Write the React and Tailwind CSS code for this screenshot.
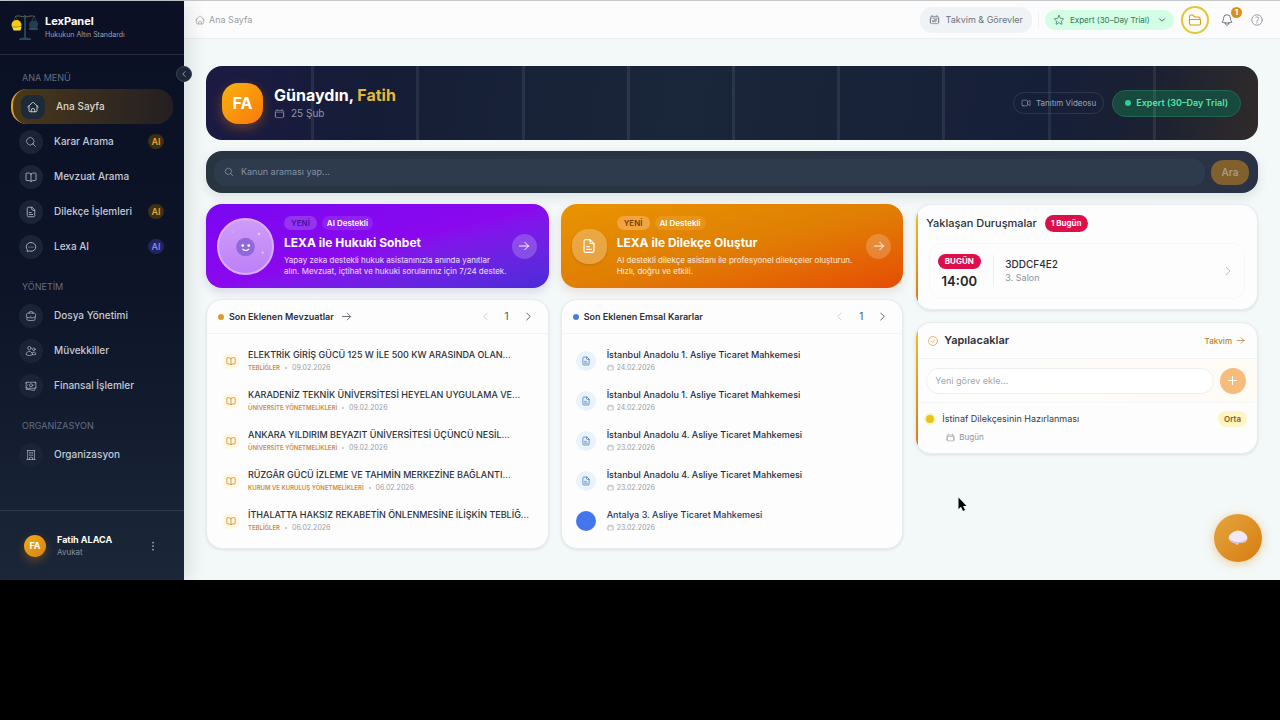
import React, { useState } from 'react';
import {
  HiOutlineMagnifyingGlass,
  HiOutlineBriefcase,
  HiOutlineUsers,
  HiOutlineBanknotes,
  HiOutlineBuildingOffice,
  HiOutlineCalendar,
  HiOutlineCalendarDays,
  HiOutlineStar,
  HiOutlineBell,
  HiOutlineQuestionMarkCircle,
  HiOutlineVideoCamera,
  HiOutlineCheckCircle,
  HiOutlineArrowRight,
  HiOutlineChevronLeft,
  HiOutlineChevronRight,
  HiOutlineChevronDown,
  HiOutlinePlus,
  HiEllipsisVertical,
} from 'react-icons/hi2';

const Svg = ({ className, children }) => (
  <svg
    viewBox="0 0 24 24"
    fill="none"
    stroke="currentColor"
    strokeWidth="1.8"
    strokeLinecap="round"
    strokeLinejoin="round"
    className={className}
    aria-hidden="true"
  >
    {children}
  </svg>
);

const HomeIcon = ({ className }) => (
  <Svg className={className}>
    <path d="M1.5 12 L10.7 3.2 a2 2 0 0 1 2.6 0 L22.5 12" />
    <path d="M4 10v9a2.5 2.5 0 0 0 2.5 2.5h11a2.5 2.5 0 0 0 2.5-2.5v-9" />
    <path d="M8.5 21.5v-3a3.5 3.5 0 0 1 7 0v3" />
  </Svg>
);

const BookIcon = ({ className }) => (
  <Svg className={className}>
    <path d="M12 6C10.5 4.5 8 4 5 4H3.5a1.5 1.5 0 0 0-1.5 1.5v12A1.5 1.5 0 0 0 3.5 19H6c2.5 0 4.5.5 6 2 1.5-1.5 3.5-2 6-2h2.5a1.5 1.5 0 0 0 1.5-1.5v-12A1.5 1.5 0 0 0 20.5 4H19c-3 0-5.5.5-7 2z" />
    <path d="M12 6v15" />
  </Svg>
);

const FileIcon = ({ className }) => (
  <Svg className={className}>
    <path d="M13.5 2.5H7A2.5 2.5 0 0 0 4.5 5v14A2.5 2.5 0 0 0 7 21.5h10a2.5 2.5 0 0 0 2.5-2.5V8.5z" />
    <path d="M13.5 2.5V6A2.5 2.5 0 0 0 16 8.5h3.5" />
    <path d="M8.5 13h4M8.5 17h7" />
  </Svg>
);

const ChatIcon = ({ className }) => (
  <Svg className={className}>
    <path d="M12 3c5.5 0 9.5 3.8 9.5 8.8s-4 8.7-9.5 8.7c-1.3 0-2.5-.2-3.6-.6L4 21l.8-3.7c-1.5-1.5-2.3-3.4-2.3-5.5C2.5 6.8 6.5 3 12 3z" />
    <path d="M8 12h.01M12 12h.01M16 12h.01" strokeWidth="2.4" />
  </Svg>
);

const FolderIcon = ({ className }) => (
  <Svg className={className}>
    <path d="M2.5 18V6A2.5 2.5 0 0 1 5 3.5h3.5L11.5 7H18a2.5 2.5 0 0 1 2.5 2.5V11" />
    <path d="M2.5 18V13a2 2 0 0 1 2-2h15a2 2 0 0 1 2 2v5a2.5 2.5 0 0 1-2.5 2.5H5A2.5 2.5 0 0 1 2.5 18z" />
  </Svg>
);

const ScalesLogo = () => (
  <svg viewBox="0 0 28 28" className="w-7 h-7 shrink-0" fill="none" aria-hidden="true">
    <path d="M4 2.5c4-1.500 6 .3 10 .3s6-1.800 10-.3" stroke="#5d6450" strokeWidth="1" />
    <path d="M14 1v23" stroke="#2f5268" strokeWidth="1.5" />
    <path d="M8 25.5c2-2 10-2 12 0z" fill="#284a60" stroke="#284a60" />
    <path d="M4.5 3L2 8M4.500 3L8 8M23 3L19 10M23 3L27 10" stroke="#2b4558" strokeWidth=".8" />
    <circle cx="5.5" cy="11" r="5" fill="#f2cb13" />
    <path d="M1.5 13h9l-1 3.500h-7z" fill="#f7dd3d" />
    <path d="M1 12.500c2.500 1.200 5.500 1 9-.5" stroke="#8b7410" strokeWidth=".7" />
    <circle cx="22.5" cy="11" r="4.5" fill="#233c50" />
    <path d="M18 15h9" stroke="#35576d" strokeWidth="1.5" />
  </svg>
);

const menu = [
  {
    title: 'ANA MENÜ',
    items: [
      { name: 'Ana Sayfa', icon: HomeIcon, active: true },
      { name: 'Karar Arama', icon: HiOutlineMagnifyingGlass, badge: 'amber' },
      { name: 'Mevzuat Arama', icon: BookIcon },
      { name: 'Dilekçe İşlemleri', icon: FileIcon, badge: 'amber' },
      { name: 'Lexa AI', icon: ChatIcon, badge: 'indigo' },
    ],
  },
  {
    title: 'YÖNETİM',
    items: [
      { name: 'Dosya Yönetimi', icon: HiOutlineBriefcase },
      { name: 'Müvekkiller', icon: HiOutlineUsers },
      { name: 'Finansal İşlemler', icon: HiOutlineBanknotes },
    ],
  },
  {
    title: 'ORGANİZASYON',
    items: [{ name: 'Organizasyon', icon: HiOutlineBuildingOffice }],
  },
];

const badgeColors = {
  amber: 'bg-[#3d3015] text-[#e0a82e]',
  indigo: 'bg-[#1f2560] text-[#8b83f0]',
};

const laws = [
  { title: 'ELEKTRİK GİRİŞ GÜCÜ 125 W İLE 500 KW ARASINDA OLAN…', type: 'TEBLİĞLER', date: '09.02.2026' },
  { title: 'KARADENİZ TEKNİK ÜNİVERSİTESİ HEYELAN UYGULAMA VE…', type: 'ÜNİVERSİTE YÖNETMELİKLERİ', date: '09.02.2026' },
  { title: 'ANKARA YILDIRIM BEYAZIT ÜNİVERSİTESİ ÜÇÜNCÜ NESİL…', type: 'ÜNİVERSİTE YÖNETMELİKLERİ', date: '09.02.2026' },
  { title: 'RÜZGÂR GÜCÜ İZLEME VE TAHMİN MERKEZİNE BAĞLANTI…', type: 'KURUM VE KURULUŞ YÖNETMELİKLERİ', date: '06.02.2026' },
  { title: 'İTHALATTA HAKSIZ REKABETİN ÖNLENMESİNE İLİŞKİN TEBLİĞ…', type: 'TEBLİĞLER', date: '06.02.2026' },
];

const decisions = [
  { title: 'İstanbul Anadolu 1. Asliye Ticaret Mahkemesi', date: '24.02.2026' },
  { title: 'İstanbul Anadolu 1. Asliye Ticaret Mahkemesi', date: '24.02.2026' },
  { title: 'İstanbul Anadolu 4. Asliye Ticaret Mahkemesi', date: '23.02.2026' },
  { title: 'İstanbul Anadolu 4. Asliye Ticaret Mahkemesi', date: '23.02.2026' },
  { title: 'Antalya 3. Asliye Ticaret Mahkemesi', date: '23.02.2026', hovered: true },
];

const NavItem = ({ item }) => {
  const Icon = item.icon;
  return (
    <a
      href="#"
      className={`flex items-center h-[35px] mx-[11px] pl-2 pr-[9px] rounded-2xl text-[10px] font-medium ${
        item.active
          ? 'border-l-2 border-[#d9a22b] bg-linear-to-r from-[#4a3818] to-[#231f22] text-[#d9d6d0]'
          : 'text-[#c3cad6]'
      }`}
    >
      <span
        className={`flex items-center justify-center w-6 h-6 mr-[11px] shrink-0 ${
          item.active ? 'rounded-lg bg-[#1d2a3a] text-[#d6d9dd]' : 'rounded-full bg-[#1b2437] text-[#aab3c2]'
        }`}
      >
        <Icon className="w-3 h-3" />
      </span>
      <span className="flex-1 whitespace-nowrap">{item.name}</span>
      {item.badge && (
        <span
          className={`flex items-center justify-center w-4 h-[15px] rounded-full text-[9px] font-semibold ${badgeColors[item.badge]}`}
        >
          AI
        </span>
      )}
    </a>
  );
};

const Sidebar = ({ onToggle }) => (
  <aside className="relative z-10 flex flex-col w-[184px] shrink-0 bg-linear-to-b from-[#0b1024] via-[#0d1428] to-[#1b2738] shadow-[4px_0_20px_rgba(15,23,42,0.12)]">
    <div className="flex items-center gap-[6px] h-[54px] pl-[11px] border-b border-white/10">
      <ScalesLogo />
      <div>
        <div className="text-[11px] leading-[14px] font-bold text-white">LexPanel</div>
        <div className="text-[7px] leading-[14px] text-[#98a0b0]">Hukukun Altın Standardı</div>
      </div>
    </div>

    <nav className="flex-1 pb-[37px]">
      {menu.map((group) => (
        <div key={group.title}>
          <h2 className="pt-[17px] pb-[5px] pl-[22px] text-[9px] leading-3 text-[#646d80]">{group.title}</h2>
          {group.items.map((item) => (
            <NavItem key={item.name} item={item} />
          ))}
        </div>
      ))}
    </nav>

    <div className="flex items-center h-[70px] pl-6 pr-6 border-t border-white/10">
      <span className="flex items-center justify-center w-[22px] h-[22px] rounded-full bg-linear-to-br from-[#f0ab1c] to-[#d9820c] text-[9px] font-bold text-white shadow-[0_4px_10px_rgba(217,130,12,0.35)]">
        FA
      </span>
      <div className="flex-1 ml-[11px]">
        <div className="text-[9px] leading-[13px] font-bold text-white">Fatih ALACA</div>
        <div className="text-[8px] leading-[13px] text-[#8790a0]">Avukat</div>
      </div>
      <button type="button" aria-label="Hesap menüsü" className="text-[#aab2c0]">
        <HiEllipsisVertical className="w-[14px] h-[14px]" />
      </button>
    </div>

    <button
      type="button"
      onClick={onToggle}
      aria-label="Menüyü daralt"
      className="absolute top-[65px] -right-2 flex items-center justify-center w-4 h-4 rounded-full bg-[#1c2636] border border-[#3a4454] text-[#c4cad4]"
    >
      <HiOutlineChevronLeft className="w-2 h-2 stroke-2" />
    </button>
  </aside>
);

const Topbar = () => (
  <header className="flex items-center justify-between h-[38px] pl-[11px] pr-4 bg-[#fcfcfc] border-b border-[#eceff0]">
    <a href="#" className="flex items-center gap-1 text-[9px] text-[#9a9fa6]">
      <HomeIcon className="w-[10px] h-[10px]" />
      Ana Sayfa
    </a>

    <div className="flex items-center">
      <button
        type="button"
        className="flex items-center gap-[6px] h-[26px] px-[9px] rounded-xl bg-[#f0f3f5] text-[9px] text-[#6b7280]"
      >
        <HiOutlineCalendarDays className="w-[11px] h-[11px]" />
        Takvim &amp; Görevler
      </button>
      <span className="w-px h-4 mx-[6px] bg-[#eef0f1]" />
      <label className="flex items-center gap-[5px] h-5 px-2 rounded-full bg-[#d3fde4] text-[#2f7a55]">
        <HiOutlineStar className="w-3 h-3" />
        <select
          aria-label="Abonelik"
          className="appearance-none w-[83px] h-4 bg-transparent text-[8px] leading-4 outline-none"
        >
          <option>Expert (30–Day Trial)</option>
        </select>
        <HiOutlineChevronDown className="w-2 h-2 stroke-3" />
      </label>
      <button
        type="button"
        aria-label="Dosyalar"
        className="flex items-center justify-center w-7 h-7 ml-[7px] rounded-full border-2 border-[#e3c53a] bg-[#fffdf3] text-[#d39a22]"
      >
        <FolderIcon className="w-[14px] h-[14px]" />
      </button>
      <button type="button" aria-label="Bildirimler" className="relative ml-[11px] text-[#5f6670]">
        <HiOutlineBell className="w-[14px] h-[14px]" />
        <span className="absolute -top-[6px] -right-2 flex items-center justify-center w-[11px] h-[11px] rounded-full bg-[#d8911b] text-[8px] font-bold text-white">
          1
        </span>
      </button>
      <button type="button" aria-label="Yardım" className="ml-4 text-[#8b9199]">
        <HiOutlineQuestionMarkCircle className="w-[14px] h-[14px]" />
      </button>
    </div>
  </header>
);

const Welcome = () => (
  <section className="relative flex items-center justify-between h-[74px] pl-4 pr-[17px] rounded-2xl overflow-hidden bg-[linear-gradient(100deg,#1c1a44_0%,#151d36_16%,#1a2639_45%,#161f38_80%,#1c2131_90%,#302b2a_100%)]">
    <div className="flex items-center gap-[11px]">
      <span className="flex items-center justify-center w-[41px] h-[41px] rounded-2xl bg-linear-to-br from-[#f7b20e] to-[#f9780b] text-base font-bold text-white shadow-[0_4px_12px_rgba(249,130,11,0.35)]">
        FA
      </span>
      <div>
        <h1 className="text-base leading-5 font-bold text-white">
          Günaydın, <span className="text-[#e6b83a]">Fatih</span>
        </h1>
        <p className="flex items-center gap-[6px] text-[10px] leading-4 text-[#8d96a6]">
          <HiOutlineCalendar className="w-[11px] h-[11px]" />
          25 Şub
        </p>
      </div>
    </div>

    <div className="flex items-center gap-2">
      <button
        type="button"
        className="flex items-center gap-[5px] h-[22px] px-[7px] rounded-full border border-white/10 text-[8px] text-[#9aa3b2]"
      >
        <HiOutlineVideoCamera className="w-[10px] h-[10px]" />
        Tanıtım Videosu
      </button>
      <span className="flex items-center gap-[5px] h-[27px] px-3 rounded-full border border-[#22664f] bg-[#17493f] text-[9px] font-semibold text-[#57e3a4]">
        <span className="w-[6px] h-[6px] rounded-full bg-[#2fcf94]" />
        Expert (30–Day Trial)
      </span>
    </div>

    {/* Column lines */}
    <div className="absolute inset-0 flex pl-[3px] pointer-events-none">
      {Array.from({ length: 10 }, (_, i) => (
        <span key={i} className="flex-1 border-r-3 border-white/8 last:border-0" />
      ))}
    </div>
  </section>
);

const LawSearch = () => (
  <form
    onSubmit={(e) => e.preventDefault()}
    className="flex items-center gap-[6px] h-[42px] pl-2 pr-[9px] rounded-2xl bg-linear-to-r from-[#283440] to-[#2a3245] shadow-[0_4px_12px_rgba(15,23,42,0.10)]"
  >
    <label className="flex flex-1 items-center gap-[7px] h-[27px] px-[10px] rounded-xl bg-[#2d3b4d] text-[#8391a3]">
      <HiOutlineMagnifyingGlass className="w-[10px] h-[10px] stroke-2" />
      <input
        type="text"
        aria-label="Kanun araması"
        placeholder="Kanun araması yap..."
        className="flex-1 h-5 bg-transparent text-[9px] leading-5 text-white outline-none placeholder:text-[#8391a3]"
      />
    </label>
    <button type="submit" className="w-[38px] h-[25px] rounded-xl bg-[#80602c] text-[10px] font-semibold text-[#a89a80]">
      Ara
    </button>
  </form>
);

const PromoCard = ({ className, badgeClass, visual, title, lines }) => (
  <a href="#" className={`flex items-center gap-[10px] h-[84px] pl-[11px] pr-3 rounded-2xl text-white ${className}`}>
    {visual}
    <div className="flex-1 min-w-0">
      <div className="flex items-center gap-[5px]">
        <span className={`px-[7px] rounded-full text-[8px] leading-[14px] font-semibold ${badgeClass}`}>YENİ</span>
        <span className="px-[5px] rounded-full bg-white/10 text-[8px] leading-[14px] font-semibold">AI Destekli</span>
      </div>
      <h2 className="mt-1 text-xs leading-[18px] font-bold">{title}</h2>
      <p className="mt-[3px] text-[8px] leading-[11px] text-white/85 whitespace-nowrap">
        {lines[0]}
        <br />
        {lines[1]}
      </p>
    </div>
    <span className="flex items-center justify-center w-[25px] h-[25px] shrink-0 rounded-full bg-white/20">
      <HiOutlineArrowRight className="w-3 h-3 stroke-2" />
    </span>
  </a>
);

const RobotFace = () => (
  <span className="flex items-center justify-center w-[57px] h-[57px] shrink-0 rounded-full bg-linear-to-b from-[#cf9cf8] to-[#bd80f8] border-2 border-[#d9b0fb]">
    <svg viewBox="0 0 57 57" className="w-full h-full" aria-hidden="true">
      <circle cx="28.5" cy="29" r="10" fill="#9167dc" />
      <circle cx="25.5" cy="27.5" r="1.5" fill="#fff" />
      <circle cx="32" cy="27.5" r="1.5" fill="#fff" />
      <path d="M25.5 31.5q3.2 2.5 6.5 0" stroke="#fff" strokeWidth="1.2" fill="none" strokeLinecap="round" />
      <circle cx="43" cy="15" r="1.5" fill="#e3c4fd" />
      <circle cx="47" cy="35" r="1.2" fill="#e3c4fd" />
      <circle cx="15" cy="13" r="1" fill="#d8b2fc" />
    </svg>
  </span>
);

const ListCard = ({ dot, title, arrow, children }) => {
  const [page, setPage] = useState(1);
  return (
    <section className="rounded-2xl bg-[#fdfdfd] border border-[#e8ecee] shadow-[0_1px_3px_rgba(15,23,42,0.10)]">
      <div className="flex items-center h-[34px] px-[11px] border-b border-[#f1f3f4]">
        <span className={`w-[6px] h-[6px] mr-[5px] rounded-full ${dot}`} />
        <h2 className="text-[9px] font-semibold text-[#2b3038]">{title}</h2>
        {arrow && <HiOutlineArrowRight className="w-[11px] h-[11px] ml-[7px] text-[#5f6670] stroke-2" />}
        <div className="flex items-center gap-[14px] ml-auto pr-[3px] text-[10px] text-[#4b525c]">
          <button type="button" aria-label="Önceki" disabled={page === 1} onClick={() => setPage(page - 1)} className="disabled:text-[#c9cdd2]">
            <HiOutlineChevronLeft className="w-[11px] h-[11px] stroke-2" />
          </button>
          <span>{page}</span>
          <button type="button" aria-label="Sonraki" onClick={() => setPage(page + 1)}>
            <HiOutlineChevronRight className="w-[11px] h-[11px] stroke-2" />
          </button>
        </div>
      </div>
      <ul className="py-[7px]">{children}</ul>
    </section>
  );
};

const LawList = () => (
  <ListCard dot="bg-[#dd9a2c]" title="Son Eklenen Mevzuatlar" arrow>
    {laws.map((law) => (
      <li key={law.title} className="flex items-center h-10 pl-4">
        <span className="flex items-center justify-center w-4 h-4 mr-[9px] shrink-0 rounded-md bg-[#fef8e4] text-[#cf8f2e]">
          <BookIcon className="w-[10px] h-[10px] stroke-2" />
        </span>
        <div className="min-w-0 whitespace-nowrap">
          <div className="text-[9px] leading-[13px] font-medium text-[#2b3038]">{law.title}</div>
          <div className="flex items-center text-[7px] leading-[13px] text-[#9a9fa6]">
            <span className="text-[6px] font-semibold text-[#d08b3c]">{law.type}</span>
            <span className="w-[2px] h-[2px] mx-[5px] rounded-full bg-[#b8bcc2]" />
            {law.date}
          </div>
        </div>
      </li>
    ))}
  </ListCard>
);

const DecisionList = () => (
  <ListCard dot="bg-[#4a7de0]" title="Son Eklenen Emsal Kararlar">
    {decisions.map((item, i) => (
      <li key={i} className="flex items-center h-10 pl-[14px]">
        <span
          className={`flex items-center justify-center w-5 h-5 mr-[11px] shrink-0 rounded-full ${
            item.hovered ? 'bg-[#4375ee] text-[#4b7cf0]' : 'bg-[#e8f3fc] text-[#3f74b8]'
          }`}
        >
          <FileIcon className="w-[10px] h-[10px]" />
        </span>
        <div className="min-w-0 whitespace-nowrap">
          <div className={`text-[9px] leading-[13px] font-medium ${item.hovered ? 'text-[#26375f]' : 'text-[#1f2d42]'}`}>
            {item.title}
          </div>
          <div className="flex items-center gap-[3px] text-[7px] leading-[13px] text-[#9a9fa6]">
            <HiOutlineCalendar className="w-[7px] h-[7px]" />
            {item.date}
          </div>
        </div>
      </li>
    ))}
  </ListCard>
);

const SideCard = ({ children }) => (
  <section className="flex rounded-2xl overflow-hidden bg-[#fdfdfd] border border-[#e8ecee] shadow-[0_1px_3px_rgba(15,23,42,0.10)]">
    <span className="w-[2px] shrink-0 bg-linear-to-b from-[#eec21b] to-[#d9731a]" />
    <div className="flex-1 min-w-0">{children}</div>
  </section>
);

const Hearings = () => (
  <SideCard>
    <div className="flex items-center gap-2 h-9 pl-2">
      <h2 className="text-[11px] font-medium text-[#2b3038]">Yaklaşan Duruşmalar</h2>
      <span className="px-[6px] rounded-full bg-[#dd0f4b] text-[8px] leading-[17px] font-bold text-white">1 Bugün</span>
    </div>
    <a href="#" className="flex items-center h-14 mt-[2px] mb-[10px] ml-[11px] mr-3 pl-[6px] pr-[10px] rounded-xl border border-[#f6f7f8]">
      <div className="flex flex-col items-center w-[46px]">
        <span className="px-[7px] rounded-full bg-[#dd0f4b] text-[8px] leading-[15px] font-bold text-white">BUGÜN</span>
        <span className="mt-1 text-[13px] leading-4 font-semibold text-[#22262d]">14:00</span>
      </div>
      <span className="w-px h-8 mx-[11px] bg-[#eceef0]" />
      <div className="flex-1">
        <div className="text-[10px] leading-[14px] font-medium text-[#2b3038]">3DDCF4E2</div>
        <div className="text-[9px] leading-[14px] text-[#8b9199]">3. Salon</div>
      </div>
      <HiOutlineChevronRight className="w-3 h-3 text-[#b6bac0] stroke-2" />
    </a>
  </SideCard>
);

const Todos = () => {
  const [task, setTask] = useState('');
  return (
    <SideCard>
      <div className="flex items-center h-9 pl-[9px] pr-3 border-b border-[#f2f3f4]">
        <HiOutlineCheckCircle className="w-3 h-3 mr-[5px] text-[#d6a83c]" />
        <h2 className="text-[11px] font-semibold text-[#2b3038]">Yapılacaklar</h2>
        <a href="#" className="flex items-center gap-1 ml-auto text-[8px] font-medium text-[#b9812c]">
          Takvim <HiOutlineArrowRight className="w-[9px] h-[9px] stroke-2" />
        </a>
      </div>
      <form
        onSubmit={(e) => e.preventDefault()}
        className="flex items-center gap-[6px] h-11 pl-2 pr-[11px] border-b border-[#f4f5f5] bg-linear-to-r from-[#fdfdfd] to-[#fffbf5]"
      >
        <input
          type="text"
          aria-label="Yeni görev"
          value={task}
          onChange={(e) => setTask(e.target.value)}
          placeholder="Yeni görev ekle..."
          className="flex-1 min-w-0 h-[26px] px-2 rounded-full border border-[#eceef0] bg-white text-[9px] outline-none placeholder:text-[#a0a5ac]"
        />
        <button
          type="submit"
          aria-label="Görev ekle"
          className="flex items-center justify-center w-[26px] h-[26px] rounded-full bg-[#f7bb7c] text-white"
        >
          <HiOutlinePlus className="w-[13px] h-[13px] stroke-2" />
        </button>
      </form>
      <div className="py-2 pl-[6px] pr-[10px]">
        <div className="flex items-center h-4">
          <span className="w-3 h-3 mr-[6px] rounded-full border-2 border-[#fbf3bd] bg-[#e8c41a]" />
          <span className="text-[9px] text-[#363b43]">İstinaf Dilekçesinin Hazırlanması</span>
          <span className="ml-auto px-[6px] rounded-full bg-[#fdf6c4] text-[8px] leading-4 font-semibold text-[#8f5a20]">Orta</span>
        </div>
        <div className="flex items-center gap-1 h-4 mt-[2px] ml-[22px] text-[8px] text-[#8b9199]">
          <HiOutlineCalendar className="w-[9px] h-[9px]" />
          Bugün
        </div>
      </div>
    </SideCard>
  );
};

const App = () => {
  const [collapsed, setCollapsed] = useState(false);

  return (
    <div className="min-h-screen bg-black font-['Inter','Noto_Sans',sans-serif]">
      <div className="relative flex border-t border-[#c5c8cb] bg-[#f3f8f8]">
        <Sidebar onToggle={() => setCollapsed(!collapsed)} />

        <div className="flex-1 min-w-0">
          <Topbar />
          <main className="flex flex-col gap-[11px] px-[22px] pt-[27px] pb-[31px]">
            <Welcome />
            <LawSearch />
            <div className="grid grid-cols-3 items-start gap-x-3">
              <div className="col-span-2 grid grid-cols-2 gap-x-3 gap-y-[11px]">
                <PromoCard
                  className="bg-linear-to-br from-[#7a06f2] via-[#8a08ee] to-[#4a2bd8] shadow-[0_4px_10px_rgba(76,29,149,0.15)]"
                  badgeClass="bg-[#9434f0] text-[#4a0f9c]"
                  visual={<RobotFace />}
                  title="LEXA ile Hukuki Sohbet"
                  lines={[
                    'Yapay zeka destekli hukuk asistanınızla anında yanıtlar',
                    'alın. Mevzuat, içtihat ve hukuki sorularınız için 7/24 destek.',
                  ]}
                />
                <PromoCard
                  className="bg-linear-to-br from-[#e99400] via-[#e07f04] to-[#e64a05] shadow-[0_4px_10px_rgba(180,83,9,0.15)]"
                  badgeClass="bg-[#f0a540] text-[#7a3c08]"
                  visual={
                    <span className="flex items-center justify-center w-[35px] h-[35px] shrink-0 rounded-2xl bg-white/25 shadow-sm">
                      <FileIcon className="w-4 h-4" />
                    </span>
                  }
                  title="LEXA ile Dilekçe Oluştur"
                  lines={[
                    'AI destekli dilekçe asistanı ile profesyonel dilekçeler oluşturun.',
                    'Hızlı, doğru ve etkili.',
                  ]}
                />
                <LawList />
                <DecisionList />
              </div>
              <div className="grid gap-3">
                <Hearings />
                <Todos />
              </div>
            </div>
          </main>
        </div>

        {/* Chat bubble */}
        <button
          type="button"
          aria-label="Lexa sohbet"
          className="absolute right-[18px] bottom-[18px] flex items-center justify-center w-12 h-12 rounded-full bg-linear-to-br from-[#e6a53c] to-[#d67c0a] shadow-[0_2px_10px_rgba(230,165,60,0.5)]"
        >
          <svg viewBox="0 0 20 16" className="w-5 h-4" aria-hidden="true">
            <path d="M5 2q5-3 10 0q4 2 4.5 6q-1 4-5 5l-3-.5l-2 2.5l-3-2q-4-.5-6-5q1-4 4.5-6z" fill="#f0e9f3" />
            <path d="M2 9q3 3 8 3t8-3q-1 3-4 4l-3-.5l-2 2.5l-3-2q-3-1-4-4z" fill="#cfc1da" />
          </svg>
        </button>

        {/* Pointer */}
        <svg viewBox="0 0 9 15" className="absolute left-[958px] top-[496px] w-[9px] h-[15px]" aria-hidden="true">
          <path d="M.5.5v11.5l2.5-2.3l2 4.3l2-1l-2-4h3.5z" fill="#000" />
        </svg>
      </div>
    </div>
  );
};

export default App;
